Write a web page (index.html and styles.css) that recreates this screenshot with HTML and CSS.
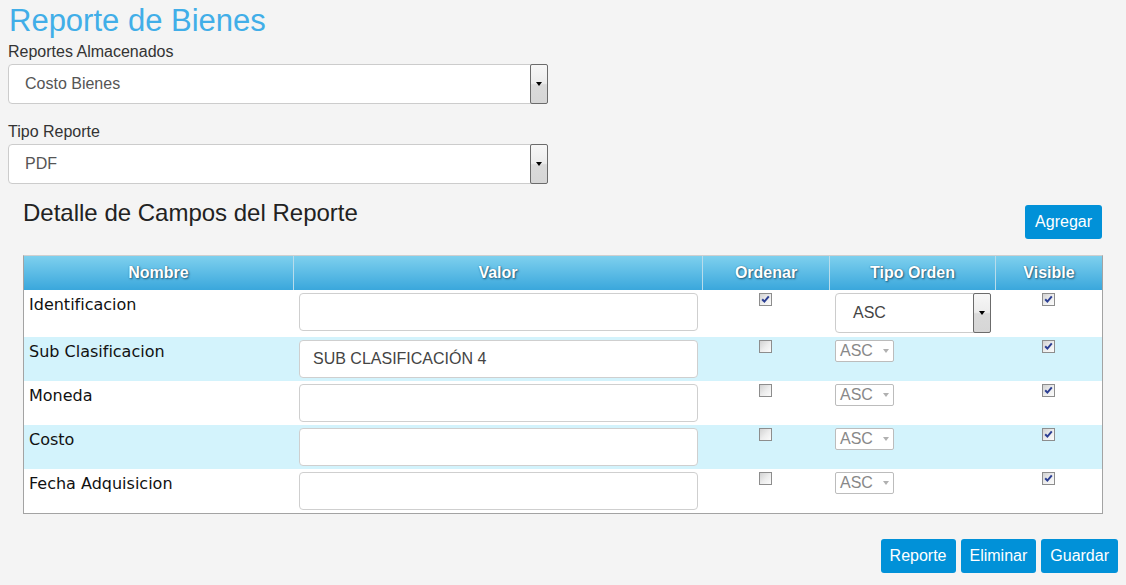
FILE: index.html
```html
<!DOCTYPE html>
<html lang="es">
<head>
<meta charset="utf-8">
<title>Reporte de Bienes</title>
<link rel="stylesheet" href="styles.css">
</head>
<body>
  <h1 class="page-title">Reporte de Bienes</h1>

  <label class="field-label">Reportes Almacenados</label>
  <div class="select select-wide">
    <span class="select-value">Costo Bienes</span>
    <span class="select-btn"><span class="caret"></span></span>
  </div>

  <label class="field-label second">Tipo Reporte</label>
  <div class="select select-wide">
    <span class="select-value">PDF</span>
    <span class="select-btn"><span class="caret"></span></span>
  </div>

  <section class="detail">
    <div class="detail-head">
      <h2 class="detail-title">Detalle de Campos del Reporte</h2>
      <button class="btn btn-add">Agregar</button>
    </div>

    <table class="grid">
      <colgroup>
        <col class="c-name"><col class="c-value"><col class="c-order"><col class="c-type"><col class="c-visible">
      </colgroup>
      <thead>
        <tr>
          <th>Nombre</th>
          <th>Valor</th>
          <th>Ordenar</th>
          <th>Tipo Orden</th>
          <th>Visible</th>
        </tr>
      </thead>
      <tbody>
        <tr class="first">
          <td class="name">Identificacion</td>
          <td><div class="text-input"></div></td>
          <td class="center"><span class="check on"><svg viewBox="0 0 11 11" width="11" height="11"><path d="M2.2 5.2 L4.4 7.6 L8.8 2.4" /></svg></span></td>
          <td><div class="select select-row"><span class="select-value">ASC</span><span class="select-btn"><span class="caret"></span></span></div></td>
          <td class="center"><span class="check on"><svg viewBox="0 0 11 11" width="11" height="11"><path d="M2.2 5.2 L4.4 7.6 L8.8 2.4" /></svg></span></td>
        </tr>
        <tr class="alt">
          <td class="name">Sub Clasificacion</td>
          <td><div class="text-input">SUB CLASIFICACIÓN 4</div></td>
          <td class="center"><span class="check"></span></td>
          <td><div class="mini-select"><span>ASC</span><span class="mini-caret"></span></div></td>
          <td class="center"><span class="check on"><svg viewBox="0 0 11 11" width="11" height="11"><path d="M2.2 5.2 L4.4 7.6 L8.8 2.4" /></svg></span></td>
        </tr>
        <tr>
          <td class="name">Moneda</td>
          <td><div class="text-input"></div></td>
          <td class="center"><span class="check"></span></td>
          <td><div class="mini-select"><span>ASC</span><span class="mini-caret"></span></div></td>
          <td class="center"><span class="check on"><svg viewBox="0 0 11 11" width="11" height="11"><path d="M2.2 5.2 L4.4 7.6 L8.8 2.4" /></svg></span></td>
        </tr>
        <tr class="alt">
          <td class="name">Costo</td>
          <td><div class="text-input"></div></td>
          <td class="center"><span class="check"></span></td>
          <td><div class="mini-select"><span>ASC</span><span class="mini-caret"></span></div></td>
          <td class="center"><span class="check on"><svg viewBox="0 0 11 11" width="11" height="11"><path d="M2.2 5.2 L4.4 7.6 L8.8 2.4" /></svg></span></td>
        </tr>
        <tr>
          <td class="name">Fecha Adquisicion</td>
          <td><div class="text-input"></div></td>
          <td class="center"><span class="check"></span></td>
          <td><div class="mini-select"><span>ASC</span><span class="mini-caret"></span></div></td>
          <td class="center"><span class="check on"><svg viewBox="0 0 11 11" width="11" height="11"><path d="M2.2 5.2 L4.4 7.6 L8.8 2.4" /></svg></span></td>
        </tr>
      </tbody>
    </table>
  </section>

  <div class="actions">
    <button class="btn">Reporte</button>
    <button class="btn">Eliminar</button>
    <button class="btn">Guardar</button>
  </div>
</body>
</html>
```

FILE: styles.css
```css
html, body {
  margin: 0;
}

body {
  background: #f4f4f4;
  font-family: "Liberation Sans", Arial, sans-serif;
  color: #333;
  padding: 0 8px;
}

.page-title {
  font-size: 31px;
  font-weight: normal;
  color: #41aee8;
  line-height: 36px;
  margin: 3px 0 0 1px;
}

.field-label {
  display: block;
  font-size: 16px;
  line-height: 20px;
  margin: 3px 0 2px;
}

.field-label.second {
  margin-top: 18px;
}

.select {
  box-sizing: border-box;
  height: 40px;
  border: 1px solid #cccccc;
  border-radius: 4px;
  background: #fff;
  display: flex;
  align-items: center;
  font-size: 16px;
  color: #555;
}

.select-wide {
  width: 540px;
}

.select-value {
  flex: 1;
  padding-left: 16px;
}

.select-btn {
  align-self: stretch;
  box-sizing: border-box;
  width: 18px;
  margin: -1px -1px -1px 0;
  border: 1px solid #6b6b6b;
  border-radius: 2px;
  background: linear-gradient(#f7f7f7 0%, #ececec 48%, #dadada 52%, #d6d6d6 100%);
  display: flex;
  align-items: center;
  justify-content: center;
}

.caret {
  width: 0;
  height: 0;
  border-left: 3.5px solid transparent;
  border-right: 3.5px solid transparent;
  border-top: 4px solid #000;
}

.detail {
  padding: 0 15px;
}

.detail-head {
  display: flex;
  justify-content: space-between;
  align-items: flex-start;
  margin-top: 15px;
}

.detail-title {
  margin: 0;
  font-size: 24px;
  line-height: 28px;
  font-weight: normal;
  color: #222;
}

.btn {
  background: #0191d8;
  color: #fff;
  border: 0;
  border-radius: 3px;
  font-family: "Liberation Sans", Arial, sans-serif;
  font-size: 16px;
  height: 34px;
  padding: 0 9px;
  cursor: pointer;
}

.btn-add {
  margin-top: 6px;
  margin-right: 1px;
  padding: 0 10px;
}

.grid {
  width: 1080px;
  margin-top: 16px;
  table-layout: fixed;
  border-collapse: separate;
  border-spacing: 0;
  border: 1px solid #a3a3a3;
  border-top-color: #cfcfcf;
  background: #fff;
}

.c-name { width: 269px; }
.c-value { width: 409px; }
.c-order { width: 127px; }
.c-type { width: 166px; }
.c-visible { width: 107px; }

.grid thead tr {
  height: 34px;
}

.grid th {
  height: 34px;
  padding: 0;
  background: linear-gradient(#7ed0ee, #3aa7dc);
  color: #fff;
  font-size: 16px;
  font-weight: bold;
  text-align: center;
  text-shadow: 1px 1px 2px #1f5a78, 0 0 1px #2a6f92;
  border-left: 1px solid #b8dceb;
}

.grid th:first-child {
  border-left: 0;
}

.grid tbody tr {
  height: 44px;
}

.grid tbody tr.first {
  height: 47px;
}

.grid tr.alt td {
  background: #d3f3fc;
}

.grid td {
  vertical-align: top;
  padding: 3px 6px 0;
}

.grid td.name {
  padding-left: 5px;
  font-family: "DejaVu Sans", Verdana, sans-serif;
  font-size: 16px;
  line-height: 24px;
  color: #111;
}

.grid td.center {
  text-align: center;
}

.text-input {
  box-sizing: border-box;
  width: 399px;
  height: 38px;
  border: 1px solid #cfcfcf;
  border-radius: 4px;
  background: #fff;
  padding-left: 13px;
  font-size: 16px;
  line-height: 36px;
  color: #444;
}

.select-row {
  width: 156px;
}

.select-row .select-value {
  padding-left: 17px;
  color: #444;
}

.check {
  display: inline-block;
  vertical-align: top;
  box-sizing: border-box;
  width: 13px;
  height: 13px;
  border: 1px solid #8d8d8d;
  background: linear-gradient(135deg, #d2d2d2 0%, #eeeeee 55%, #fbfbfb 100%);
}

.check svg {
  display: block;
}

.check svg path {
  fill: none;
  stroke: #2c3f93;
  stroke-width: 2;
}

.mini-select {
  box-sizing: border-box;
  width: 59px;
  height: 22px;
  border: 1px solid #bcbcbc;
  border-radius: 2px;
  background: #fff;
  display: flex;
  align-items: center;
  justify-content: space-between;
  padding: 0 4px 0 4px;
  font-size: 16px;
  color: #888;
}

.mini-caret {
  width: 0;
  height: 0;
  border-left: 3.5px solid transparent;
  border-right: 3.5px solid transparent;
  border-top: 4px solid #b0b0b0;
}

.actions {
  display: flex;
  justify-content: flex-end;
  gap: 5px;
  margin-top: 25px;
}
```
